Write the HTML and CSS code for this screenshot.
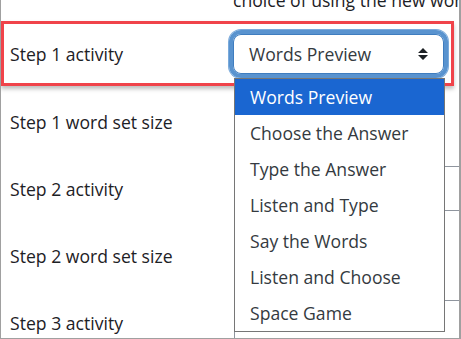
FILE: index.html
```html
<!DOCTYPE html>
<html lang="en">
<head>
    <meta charset="UTF-8">
    <title>Step activities</title>
    <link rel="stylesheet" href="styles.css">
</head>
<body>
    <div class="frame">
        <p class="intro">choice of using the new words setting</p>

        <!-- Step 1 activity (highlighted) -->
        <div class="row highlight">
            <div class="label">Step 1 activity</div>
            <div class="control">
                <div class="select focused">
                    <span>Words Preview</span>
                    <svg class="arrows" width="10" height="12" viewBox="0 0 10 12">
                        <path d="M5 0 L10 5 H0 Z M5 12 L10 7 H0 Z" fill="#1d2125"/>
                    </svg>
                </div>
            </div>
        </div>

        <div class="row">
            <div class="label">Step 1 word set size</div>
            <div class="control">
                <div class="input small"></div>
            </div>
        </div>

        <div class="row">
            <div class="label">Step 2 activity</div>
            <div class="control">
                <div class="select behind"></div>
            </div>
        </div>

        <div class="row">
            <div class="label">Step 2 word set size</div>
            <div class="control">
                <div class="input small"></div>
            </div>
        </div>

        <div class="row">
            <div class="label">Step 3 activity</div>
            <div class="control">
                <div class="select behind"></div>
            </div>
        </div>

        <!-- Open dropdown list -->
        <ul class="dropdown">
            <li class="active">Words Preview</li>
            <li>Choose the Answer</li>
            <li>Type the Answer</li>
            <li>Listen and Type</li>
            <li>Say the Words</li>
            <li>Listen and Choose</li>
            <li>Space Game</li>
        </ul>
    </div>
</body>
</html>
```

FILE: styles.css
```css
* {
    margin: 0;
    padding: 0;
    box-sizing: border-box;
}

body {
    font-family: 'Open Sans', 'Noto Sans', sans-serif;
    font-size: 17.6px;
    color: #1d2125;
    background: white;
}

.frame {
    position: relative;
    width: 461px;
    height: 339px;
    border-left: 1px solid #a0a0a0;
    border-right: 2px solid #a0a0a0;
    border-bottom: 1px solid #a0a0a0;
    overflow: hidden;
}

.intro {
    margin-top: -13px;
    height: 34px;
    padding-left: 232px;
    line-height: 26px;
    white-space: nowrap;
}

.row {
    display: flex;
    align-items: center;
    height: 67px;
}

.row.highlight {
    width: 453px;
    height: 65px;
    border: 3px solid #f0434a;
    box-shadow: 0 3px 4px rgba(0, 0, 0, 0.25);
    margin-bottom: 2px;
}

.label {
    flex-shrink: 0;
    width: 229px;
    padding-left: 9px;
}

.highlight .label {
    width: 225px;
    padding-left: 6px;
}

.control {
    flex: 1;
    min-width: 0;
}

.select {
    display: flex;
    align-items: center;
    justify-content: space-between;
    height: 48px;
    width: 219px;
    border: 4px solid #5993cf;
    border-radius: 12px;
    box-shadow: inset 0 0 0 1px #3f7dbf, 0 0 0 1px #7aaadb;
    padding: 0 16px 0 16px;
    color: #343a40;
}

.select.behind {
    height: 45px;
    width: 240px;
    margin-left: 4px;
    border: 1px solid #8f959e;
    border-radius: 6px;
    box-shadow: none;
}

.input.small {
    height: 45px;
    width: 120px;
    margin-left: 4px;
    border: 1px solid #8f959e;
    border-radius: 6px;
}

.dropdown {
    position: absolute;
    left: 233px;
    top: 78px;
    width: 211px;
    list-style: none;
    background: white;
    border: 1px solid #767676;
    color: #343a40;
}

.dropdown li {
    height: 36px;
    line-height: 36px;
    padding-left: 15px;
    white-space: nowrap;
}

.dropdown li.active {
    background: #1a66d1;
    color: white;
}
```
